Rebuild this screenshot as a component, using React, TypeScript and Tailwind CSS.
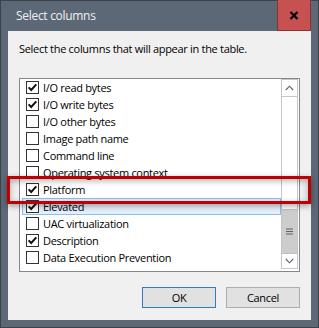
import React from "react";

const rows = [
  { label: "I/O read bytes", checked: true },
  { label: "I/O write bytes", checked: true },
  { label: "I/O other bytes", checked: false },
  { label: "Image path name", checked: false },
  { label: "Command line", checked: false },
  { label: "Operating system context", checked: false },
  { label: "Platform", checked: true },
  { label: "Elevated", checked: true, selected: true },
  { label: "UAC virtualization", checked: false },
  { label: "Description", checked: true },
  { label: "Data Execution Prevention", checked: false },
];

function CheckBox({ checked }: { checked: boolean }) {
  return (
    <div className="w-[13px] h-[13px] border border-[#333333] bg-white flex items-center justify-center shrink-0">
      {checked && (
        <svg width="11" height="11" viewBox="0 0 11 11">
          <path d="M1.6 5.4 L4.2 8 L9.3 2.4" fill="none" stroke="#111" strokeWidth="2" />
        </svg>
      )}
    </div>
  );
}

export default function App() {
  return (
    <div className="w-[319px] h-[328px] bg-[#3c424a] p-[1px] font-['Open_Sans','Noto_Sans',sans-serif] text-[11px] tracking-[-0.3px] relative">
      <div className="w-full h-full bg-[#5d6876] flex flex-col">
        {/* Title bar */}
        <div className="h-[30px] flex items-stretch shrink-0">
          <div className="flex-1 flex items-center pl-[15px] text-[#eef0f2] text-[12px]">Select columns</div>
          <div className="w-[34px] -mt-[1px] mr-[7px] bg-[#c75050] border-l border-r border-b border-[#8a3535] flex items-center justify-center">
            <svg width="10" height="9" viewBox="0 0 10 9">
              <path d="M1.5 1 L8.5 8 M8.5 1 L1.5 8" stroke="#000" strokeWidth="2.2" />
            </svg>
          </div>
        </div>

        {/* Content */}
        <div className="mx-[7px] h-[289px] bg-[#f0f0f0] flex flex-col pt-[10px] px-[11px]">
          <p className="h-[16px] leading-[16px] text-[#000]">Select the columns that will appear in the table.</p>

          <div className="mt-[21px] h-[194px] border border-[#828790] bg-white flex">
            <div className="flex-1 pl-[2px]">
              {rows.map((r) => (
                <div
                  key={r.label}
                  className={`h-[17px] flex items-center pl-[3px] gap-[4px] border whitespace-nowrap overflow-hidden ${
                    r.selected ? "bg-[#e3effb] border-[#8fbde8]" : "border-transparent"
                  }`}
                >
                  <CheckBox checked={r.checked} />
                  <span className="text-[#000] leading-[15px]">{r.label}</span>
                </div>
              ))}
            </div>

            {/* Scrollbar */}
            <div className="w-[17px] mr-[1px] h-[190px] border border-[#c6c6c6] flex flex-col">
              <div className="h-[17px] border-b border-[#c6c6c6] flex items-center justify-center">
                <svg width="9" height="6" viewBox="0 0 9 6">
                  <path d="M0.8 5 L4.5 1.2 L8.2 5" fill="none" stroke="#606060" strokeWidth="1.1" />
                </svg>
              </div>
              <div className="h-[112px]" />
              <div className="h-[45px] bg-[#cdcdcd] border-t border-b border-[#c0c0c0] flex items-center justify-center">
                <svg width="7" height="7" viewBox="0 0 7 7">
                  <path d="M0 1 H7 M0 3.5 H7 M0 6 H7" stroke="#606060" strokeWidth="1.2" />
                </svg>
              </div>
              <div className="flex-1 flex items-center justify-center">
                <svg width="9" height="6" viewBox="0 0 9 6">
                  <path d="M0.8 1 L4.5 4.8 L8.2 1" fill="none" stroke="#606060" strokeWidth="1.1" />
                </svg>
              </div>
            </div>
          </div>

          <div className="mt-[15px] flex justify-end gap-[10px]">
            <button className="w-[74px] h-[21px] bg-[#e1e1e1] border border-[#2f7ec4] text-[#000] leading-none">OK</button>
            <button className="w-[74px] h-[21px] bg-[#e1e1e1] border border-[#adadad] text-[#000] leading-none">Cancel</button>
          </div>
        </div>
      </div>

      {/* annotation highlight */}
      <div className="absolute left-[7px] top-[176px] w-[304px] h-[28px] border-[3px] border-[#c00000] shadow-[0_2px_6px_rgba(0,0,0,0.35),inset_0_2px_6px_rgba(0,0,0,0.3)]" />
    </div>
  );
}
